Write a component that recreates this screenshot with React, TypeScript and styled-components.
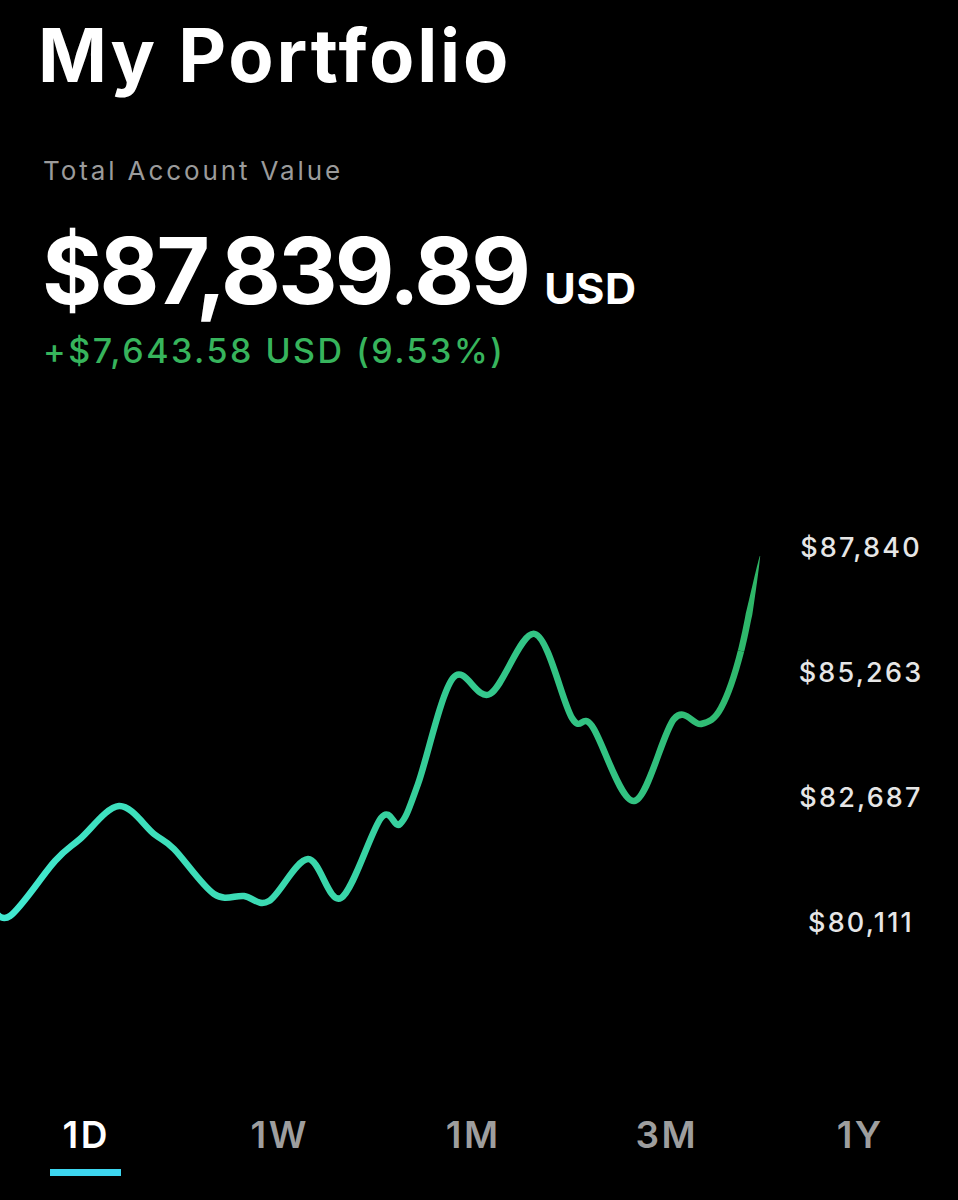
import React from "react";
import styled, { createGlobalStyle } from "styled-components";

const Global = createGlobalStyle`
  html, body { margin: 0; padding: 0; background: #000; }
  body { font-family: Inter, "Noto Sans", sans-serif; -webkit-font-smoothing: antialiased; }
`;

const Page = styled.main`
  width: 958px;
  height: 1200px;
  background: #000;
  color: #fff;
  display: flex;
  flex-direction: column;
  overflow: hidden;
`;

const Header = styled.header`
  display: flex;
  flex-direction: column;
  padding: 18px 0 0 38px;
`;

const Title = styled.h1`
  margin: 0;
  font-size: 74px;
  line-height: 1;
  font-weight: 700;
  letter-spacing: 2.8px;
`;

const Label = styled.div`
  margin: 66px 0 0 5px;
  font-size: 26px;
  line-height: 1;
  font-weight: 400;
  color: #9b9b9b;
  letter-spacing: 2.9px;
`;

const ValueRow = styled.div`
  display: flex;
  align-items: baseline;
  gap: 16px;
  margin: 41px 0 0 4px;
`;

const Amount = styled.span`
  font-size: 92px;
  line-height: 1;
  font-weight: 700;
  letter-spacing: -2.8px;
`;

const Currency = styled.span`
  font-size: 43px;
  line-height: 1;
  font-weight: 700;
  letter-spacing: 0.5px;
`;

const Change = styled.div`
  margin: 17px 0 0 5px;
  font-size: 34px;
  line-height: 1;
  font-weight: 500;
  color: #37b45c;
  letter-spacing: 2.5px;
`;

const ChartSection = styled.section`
  display: flex;
  margin-top: 153px;
  height: 430px;
`;

const ChartSvg = styled.svg`
  display: block;
  width: 780px;
  height: 430px;
  flex: none;
`;

const Axis = styled.div`
  width: 162px;
  padding: 13px 16px 0 0;
  display: flex;
  flex-direction: column;
  align-items: center;
  gap: 98px;
`;

const AxisLabel = styled.span`
  font-size: 27px;
  line-height: 1;
  font-weight: 500;
  color: #e6e6e6;
  letter-spacing: 2.2px;
`;

const Tabs = styled.nav`
  margin-top: auto;
  margin-bottom: 24px;
  display: flex;
  gap: 73.5px;
  padding-left: 25px;
`;

const Tab = styled.button<{ $active?: boolean }>`
  all: unset;
  width: 120px;
  display: flex;
  flex-direction: column;
  align-items: center;
  gap: 16px;
  font-family: Inter, "Noto Sans", sans-serif;
  font-size: 37px;
  line-height: 1;
  font-weight: 600;
  color: ${(p) => (p.$active ? "#ffffff" : "#9e9e9e")};
`;

const TabText = styled.span`
  letter-spacing: 2.5px;
  margin-right: -2.5px;
`;

const Underline = styled.span<{ $active?: boolean }>`
  width: 71px;
  height: 7px;
  background: ${(p) => (p.$active ? "#3dd6f0" : "transparent")};
`;

type Pt = [number, number];
const OFFSET = 520;
const pts: Pt[] = ([
  [-10, 905], [10, 915], [55, 860], [80, 838], [119, 805], [154, 833], [174, 848],
  [214, 893], [244, 895], [269, 900], [308, 858], [341, 897], [381, 817], [400, 823],
  [418, 783], [453, 677], [490, 693], [535, 633], [572, 717], [592, 725], [634, 800],
  [674, 718], [701, 723], [721, 707], [741, 650], [760, 555],
] as Pt[]).map(([x, y]) => [x, y - OFFSET] as Pt);

type Seg = { p1: Pt; c1: Pt; c2: Pt; p2: Pt };

function segments(p: Pt[]): Seg[] {
  const out: Seg[] = [];
  for (let i = 0; i < p.length - 1; i++) {
    const p0 = p[i - 1] || p[i];
    const p1 = p[i];
    const p2 = p[i + 1];
    const p3 = p[i + 2] || p2;
    out.push({
      p1,
      c1: [p1[0] + (p2[0] - p0[0]) / 6, p1[1] + (p2[1] - p0[1]) / 6],
      c2: [p2[0] - (p3[0] - p1[0]) / 6, p2[1] - (p3[1] - p1[1]) / 6],
      p2,
    });
  }
  return out;
}

const segs = segments(pts);
const bodySegs = segs.slice(0, -1);
const last = segs[segs.length - 1];

const f = (n: number) => n.toFixed(2);
const linePath =
  `M${f(bodySegs[0].p1[0])},${f(bodySegs[0].p1[1])}` +
  bodySegs
    .map((s) => ` C${f(s.c1[0])},${f(s.c1[1])} ${f(s.c2[0])},${f(s.c2[1])} ${f(s.p2[0])},${f(s.p2[1])}`)
    .join("");

function bez(s: Seg, t: number): Pt {
  const u = 1 - t;
  return [
    u * u * u * s.p1[0] + 3 * u * u * t * s.c1[0] + 3 * u * t * t * s.c2[0] + t * t * t * s.p2[0],
    u * u * u * s.p1[1] + 3 * u * u * t * s.c1[1] + 3 * u * t * t * s.c2[1] + t * t * t * s.p2[1],
  ];
}
function bezD(s: Seg, t: number): Pt {
  const u = 1 - t;
  return [
    3 * u * u * (s.c1[0] - s.p1[0]) + 6 * u * t * (s.c2[0] - s.c1[0]) + 3 * t * t * (s.p2[0] - s.c2[0]),
    3 * u * u * (s.c1[1] - s.p1[1]) + 6 * u * t * (s.c2[1] - s.c1[1]) + 3 * t * t * (s.p2[1] - s.c2[1]),
  ];
}

const HALF = 3.25;

function taperPolygon(s: Seg): string {
  const left: Pt[] = [];
  const right: Pt[] = [];
  const N = 24;
  for (let i = 0; i <= N; i++) {
    const t = i / N;
    const [x, y] = bez(s, t);
    const [dx, dy] = bezD(s, t);
    const len = Math.hypot(dx, dy) || 1;
    const nx = -dy / len;
    const ny = dx / len;
    const w = t < 0.35 ? HALF : HALF * (1 - (t - 0.35) / 0.65) + 0.2;
    left.push([x + nx * w, y + ny * w]);
    right.push([x - nx * w, y - ny * w]);
  }
  return [...left, ...right.reverse()].map(([x, y]) => `${f(x)},${f(y)}`).join(" ");
}

const tip = taperPolygon(last);

const axisValues = ["$87,840", "$85,263", "$82,687", "$80,111"];
const ranges = ["1D", "1W", "1M", "3M", "1Y"];

export default function App() {
  return (
    <>
      <Global />
      <Page>
        <Header>
          <Title>My Portfolio</Title>
          <Label>Total Account Value</Label>
          <ValueRow>
            <Amount>$87,839.89</Amount>
            <Currency>USD</Currency>
          </ValueRow>
          <Change>+$7,643.58 USD (9.53%)</Change>
        </Header>
        <ChartSection>
          <ChartSvg viewBox="0 0 780 430">
            <defs>
              <linearGradient id="lineGrad" gradientUnits="userSpaceOnUse" x1="0" y1="395" x2="760" y2="35">
                <stop offset="0" stopColor="#42ead2" />
                <stop offset="0.55" stopColor="#35cc96" />
                <stop offset="1" stopColor="#2eb565" />
              </linearGradient>
            </defs>
            <path d={linePath} fill="none" stroke="url(#lineGrad)" strokeWidth={HALF * 2} strokeLinejoin="round" strokeLinecap="butt" />
            <polygon points={tip} fill="url(#lineGrad)" />
          </ChartSvg>
          <Axis>
            {axisValues.map((v) => (
              <AxisLabel key={v}>{v}</AxisLabel>
            ))}
          </Axis>
        </ChartSection>
        <Tabs>
          {ranges.map((r, i) => (
            <Tab key={r} $active={i === 0}>
              <TabText>{r}</TabText>
              <Underline $active={i === 0} />
            </Tab>
          ))}
        </Tabs>
      </Page>
    </>
  );
}
